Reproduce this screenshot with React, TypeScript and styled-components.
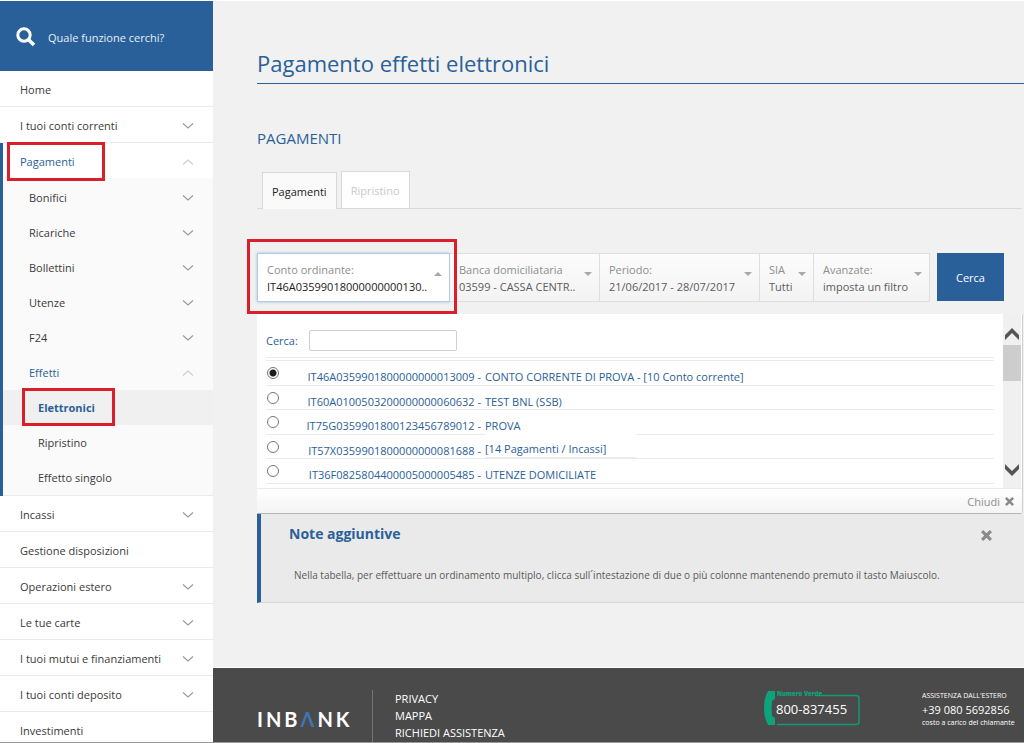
import React, { useState } from "react";
import styled, { createGlobalStyle, css } from "styled-components";

const blue = "#2a6099";
const line = "#ebebeb";

const GlobalStyle = createGlobalStyle`
  *, *::before, *::after { box-sizing: border-box; }
  body { margin: 0; background: #f1f1f1; }
  body, button, input { font-family: "Open Sans", "Noto Sans", sans-serif; font-size: 11px; }
  button { border: 0; padding: 0; background: none; color: inherit; text-align: left; cursor: pointer; }
  a { color: inherit; text-decoration: none; }
  ul { list-style: none; margin: 0; padding: 0; }
  h1, h2, h3, p { margin: 0; font-weight: 400; }
`;

const Page = styled.div`
  display: flex;
  height: 100vh;
  overflow: hidden;
  border-top: 1px solid #fff;
  border-bottom: 1px solid #999;
`;

const Sidebar = styled.aside`
  flex: 0 0 213px;
  min-width: 0;
  background: #fff;
  color: #3a3a3a;
`;

const SearchBox = styled.label`
  display: flex;
  align-items: center;
  gap: 12px;
  height: 70px;
  padding: 2px 16px 0;
  background: ${blue};
  svg { flex: none; }
`;

const SearchInput = styled.input`
  flex: 1;
  min-width: 0;
  border: 0;
  padding: 0;
  outline: 0;
  background: transparent;
  color: #fff;
  &::placeholder { color: #e6eef6; opacity: 1; }
`;

const MenuItem = styled.li<{ $open?: boolean }>`
  position: relative;
  ${(p) => p.$open && css`
    &::before {
      content: "";
      position: absolute;
      inset: 0 auto 0 0;
      width: 3px;
      background: ${blue};
      z-index: 1;
    }
  `}
`;

const rowStyle = css<{ $level?: number; $active?: boolean }>`
  position: relative;
  display: flex;
  align-items: center;
  justify-content: space-between;
  width: 100%;
  height: ${(p) => (p.$level ? 35 : 36)}px;
  padding: ${(p) => (p.$level ? 0 : 2)}px 19px 0 ${(p) => 20 + 9 * (p.$level || 0)}px;
  border-bottom: ${(p) => (p.$level ? "0" : `1px solid ${p.$active ? "#fafafa" : line}`)};
  color: ${(p) => (p.$active ? blue : "#3a3a3a")};
  white-space: nowrap;
`;

const RowButton = styled.button`${rowStyle}`;
const RowLink = styled.a<{ $current?: boolean }>`
  ${rowStyle}
  ${(p) => p.$current && css`background: #f0f0f0; font-weight: 700;`}
`;

const SubMenu = styled.ul`
  padding-top: 1px;
  background: #fafafa;
  border-bottom: 1px solid ${line};
`;

const Highlight = styled.span<{ $x: number; $y: number; $w: number; $h: number }>`
  position: absolute;
  left: ${(p) => p.$x}px;
  top: ${(p) => p.$y}px;
  width: ${(p) => p.$w}px;
  height: ${(p) => p.$h}px;
  border: 3px solid #da1f2b;
  pointer-events: none;
  z-index: 2;
`;

const Main = styled.div`
  flex: 1;
  min-width: 0;
  display: flex;
  flex-direction: column;
`;

const Content = styled.main`
  flex: 1 0 auto;
  padding: 44px 0 0 44px;
`;

const Title = styled.h1`
  height: 39px;
  border-bottom: 1px solid ${blue};
  color: ${blue};
  font-size: 22px;
  line-height: 37px;
`;

const Subtitle = styled.h2`
  margin-top: 42px;
  color: ${blue};
  font-size: 15px;
  line-height: 24px;
`;

const Tabs = styled.div`
  display: flex;
  align-items: flex-end;
  gap: 4px;
  margin: 21px 2px 0 0;
  padding-left: 5px;
  border-bottom: 1px solid #d8d8d8;
`;

const Tab = styled.button<{ $selected?: boolean }>`
  height: 37px;
  padding: 0 9px;
  border: 1px solid #d8d8d8;
  border-bottom: 0;
  background: ${(p) => (p.$selected ? "#fafafa" : "#fff")};
  color: ${(p) => (p.$selected ? "#222" : "#c9c9c9")};
  margin-bottom: ${(p) => (p.$selected ? -1 : 0)}px;
`;

const Filters = styled.div`
  display: flex;
  align-items: flex-start;
  position: relative;
  margin: 44px 20px 0 0;
`;

const Filter = styled.button<{ $w: number; $open?: boolean }>`
  display: flex;
  flex: 0 1 ${(p) => p.$w}px;
  min-width: 0;
  height: 49px;
  justify-content: space-between;
  padding: 7px 7px 0 9px;
  border: 1px solid #dedede;
  border-left-width: 0;
  background: linear-gradient(#fcfcfc, #f3f3f3);
  color: #5c5c5c;
  line-height: 17px;
  white-space: nowrap;
  ${(p) => p.$open && css`
    background: #fff;
    border: 1px solid #b4cbe3;
    box-shadow: 0 0 3px #9dbfe0;
    color: #1c1c1c;
  `}
`;

const FilterText = styled.span`
  display: flex;
  flex-direction: column;
`;

const FilterName = styled.span`
  color: #8e8e8e;
`;

const Caret = styled.span<{ $up?: boolean }>`
  flex: none;
  width: 0;
  height: 0;
  margin-top: 11px;
  border: 4px solid transparent;
  border-top-color: ${(p) => (p.$up ? "transparent" : "#a8a8a8")};
  border-bottom-color: ${(p) => (p.$up ? "#a8a8a8" : "transparent")};
  border-top-width: ${(p) => (p.$up ? 0 : 4)}px;
  border-bottom-width: ${(p) => (p.$up ? 4 : 0)}px;
`;

const SubmitButton = styled.button`
  flex: none;
  width: 67px;
  height: 48px;
  margin-left: auto;
  background: ${blue};
  color: #fff;
  text-align: center;
`;

const Panel = styled.section`
  margin: 12px 1px 0 0;
  background: #fff;
  border-right: 1px solid #cfcfcf;
  border-bottom: 1px solid #b5b5b5;
  border-radius: 0 0 3px 0;
  color: ${blue};
`;

const PanelBody = styled.div`
  display: flex;
  height: 174px;
`;

const PanelList = styled.div`
  flex: 1;
  min-width: 0;
  padding: 16px 9px 0 9px;
`;

const PanelSearch = styled.label`
  display: flex;
  align-items: center;
  gap: 11px;
  height: 28px;
  padding-bottom: 6px;
  border-bottom: 1px solid ${line};
`;

const PanelInput = styled.input`
  width: 148px;
  height: 21px;
  border: 1px solid #cfcfcf;
  border-radius: 2px;
  padding: 0 4px;
`;

const Accounts = styled.div`
  display: flex;
  flex-direction: column;
  height: 124px;
  margin-top: 2px;
  border-top: 1px solid ${line};
`;

const Account = styled.label`
  display: flex;
  flex: 1;
  border-bottom: 1px solid ${line};
  line-height: 32px;
  height: 24px;
  white-space: nowrap;
`;

const Iban = styled.span`
  width: 202px;
  margin-right: 4px;
  text-align: right;
`;

const AccountName = styled.span<{ $lifted?: boolean }>`
  ${(p) => p.$lifted && css`
    position: relative;
    width: 151px;
    height: 25px;
    margin-top: -2px;
    background: #fff;
    border-bottom: 1px solid ${line};
  `}
`;

const Radio = styled.input`
  appearance: none;
  flex: none;
  width: 12px;
  height: 12px;
  margin: 6px 0 0 1px;
  border: 1px solid #767676;
  border-radius: 50%;
  background: #fff;
  &:checked { background: radial-gradient(circle, #1b1b1b 0 3px, #fff 4px); }
`;

const ScrollTrack = styled.div`
  display: flex;
  flex-direction: column;
  align-items: center;
  flex: none;
  width: 18px;
  padding: 14px 0 12px;
  margin-right: 1px;
  background: #f0f0f0;
  svg:last-child { margin-top: auto; }
`;

const ScrollThumb = styled.div`
  width: 18px;
  height: 36px;
  margin-top: 5px;
  background: #cdcdcd;
`;

const PanelFooter = styled.div`
  display: flex;
  justify-content: flex-end;
  height: 25px;
  padding-right: 8px;
  border-top: 1px solid ${line};
  background: linear-gradient(#fff, #f4f4f4);
`;

const CloseText = styled.button`
  display: flex;
  align-items: center;
  gap: 5px;
  color: #8e8e8e;
`;

const Note = styled.section`
  position: relative;
  height: 89px;
  padding: 10px 16px 0 28px;
  border-left: 4px solid ${blue};
  border-bottom: 1px solid #d6d6d6;
  background: #eaeaea;
`;

const NoteTitle = styled.h3`
  color: ${blue};
  font-size: 14px;
  font-weight: 700;
  line-height: 20px;
`;

const NoteText = styled.p`
  margin-top: 22px;
  padding-left: 5px;
  color: #5a5a5a;
  font-size: 10px;
  line-height: 18px;
`;

const NoteClose = styled.button`
  position: absolute;
  top: 16px;
  right: 32px;
  display: flex;
`;

const Footer = styled.footer`
  display: flex;
  flex: none;
  height: 75px;
  padding: 22px 7px 0 44px;
  border-top: 1px solid #fff;
  background: #4a4a4b;
  color: #fff;
`;

const Logo = styled.div`
  width: 116px;
  padding-top: 17px;
  border-right: 1px solid #747474;
  font-family: Lato, sans-serif;
  font-size: 20px;
  font-weight: 700;
  line-height: 24px;
  letter-spacing: 3px;
  span { color: #3f74b0; }
`;

const FooterLinks = styled.nav`
  display: flex;
  flex-direction: column;
  margin-left: 22px;
  line-height: 17px;
`;

const FooterContacts = styled.div`
  display: flex;
  gap: 62px;
  margin-left: auto;
`;

const GreenNumber = styled.div`
  position: relative;
  width: 96px;
  height: 37px;
  padding-left: 12px;
  font-size: 13px;
  line-height: 39px;
  white-space: nowrap;
  svg { position: absolute; left: 0; top: 0; }
`;

const Foreign = styled.div`
  width: 95px;
  white-space: nowrap;
`;
const Small = styled.div`
  font-size: 7px;
  line-height: 12px;
`;
const ForeignNumber = styled.div`
  line-height: 15px;
`;

const Chevron = ({ up }: { up?: boolean }) => (
  <svg width="12" height="8" viewBox="0 0 12 8" fill="none" stroke={up ? "#cdcdcd" : "#9b9b9b"} strokeWidth="1.2">
    <path d={up ? "M1 6.5 6 2l5 4.5" : "M1 1.5 6 6l5-4.5"} />
  </svg>
);

const ScrollArrow = ({ up }: { up?: boolean }) => (
  <svg width="14" height="12" viewBox="0 0 14 12" fill="#555">
    <path d={up ? "M7 0 14 7v5L7 5 0 12V7Z" : "M7 12 14 5V0L7 7 0 0v5Z"} />
  </svg>
);

const Cross = ({ size }: { size: number }) => (
  <svg width={size} height={size} viewBox="0 0 10 10" stroke="#8a8a8a" strokeWidth="2.8">
    <path d="M1 1l8 8M9 1l-8 8" />
  </svg>
);

const SearchIcon = () => (
  <svg width="20" height="20" viewBox="0 0 20 20" fill="none" stroke="#fff" strokeWidth="3">
    <circle cx="8" cy="8" r="6.2" />
    <path d="M12.4 12.4 18 18" strokeWidth="3.6" />
  </svg>
);

const PhoneFrame = () => (
  <svg width="96" height="37" viewBox="0 0 96 37" fill="none" aria-hidden="true">
    <path d="M4 1H11L11 9 8 11Q7 18 8 26L11 28V35H4Q0 28 0 18T4 1Z" fill="#0fa37b" />
    <path d="M53 5.5H92Q95 5.5 95 8.5V31.5Q95 34.5 92 34.5H13" stroke="#0f9b76" strokeWidth="1.5" />
    <text x="13" y="6" fontSize="6" fontWeight="800" fontFamily="Open Sans, sans-serif" fill="#0fa37b">Numero Verde</text>
  </svg>
);

const subItems = ["Bonifici", "Ricariche", "Bollettini", "Utenze", "F24"];
const lowerItems: [string, boolean][] = [
  ["Incassi", true],
  ["Gestione disposizioni", false],
  ["Operazioni estero", true],
  ["Le tue carte", true],
  ["I tuoi mutui e finanziamenti", true],
  ["I tuoi conti deposito", true],
  ["Investimenti", false],
];

const accounts = [
  { iban: "IT46A0359901800000000013009", name: "CONTO CORRENTE DI PROVA - [10 Conto corrente]" },
  { iban: "IT60A0100503200000000060632", name: "TEST BNL (SSB)" },
  { iban: "IT75G0359901800123456789012", name: "PROVA" },
  { iban: "IT57X0359901800000000081688", name: "[14 Pagamenti / Incassi]", lifted: true },
  { iban: "IT36F0825804400005000005485", name: "UTENZE DOMICILIATE" },
];

const filters = [
  { name: "Conto ordinante:", value: "IT46A03599018000000000130..", w: 193, open: true },
  { name: "Banca domiciliataria", value: "03599 - CASSA CENTR..", w: 150 },
  { name: "Periodo:", value: "21/06/2017 - 28/07/2017", w: 160 },
  { name: "SIA", value: "Tutti", w: 54 },
  { name: "Avanzate:", value: "imposta un filtro", w: 116 },
];

const Entry = ({ label, expandable }: { label: string; expandable: boolean }) => (
  <MenuItem>
    {expandable ? (
      <RowButton>{label}<Chevron /></RowButton>
    ) : (
      <RowLink href="#">{label}</RowLink>
    )}
  </MenuItem>
);

export default function App() {
  const [selected, setSelected] = useState(0);
  return (
    <>
      <GlobalStyle />
      <Page>
        <Sidebar>
          <SearchBox>
            <SearchIcon />
            <SearchInput placeholder="Quale funzione cerchi?" aria-label="Quale funzione cerchi?" />
          </SearchBox>
          <ul>
            <Entry label="Home" expandable={false} />
            <Entry label="I tuoi conti correnti" expandable />
            <MenuItem $open>
              <RowButton $active aria-expanded>
                Pagamenti
                <Chevron up />
                <Highlight $x={7} $y={-1} $w={98} $h={39} />
              </RowButton>
              <SubMenu>
                {subItems.map((s) => (
                  <li key={s}><RowButton $level={1}>{s}<Chevron /></RowButton></li>
                ))}
                <li>
                  <RowButton $level={1} $active aria-expanded>Effetti<Chevron up /></RowButton>
                  <ul>
                    <li>
                      <RowLink href="#" $level={2} $active $current>
                        Elettronici
                        <Highlight $x={22} $y={-2} $w={93} $h={38} />
                      </RowLink>
                    </li>
                    <li><RowLink href="#" $level={2}>Ripristino</RowLink></li>
                    <li><RowLink href="#" $level={2}>Effetto singolo</RowLink></li>
                  </ul>
                </li>
              </SubMenu>
            </MenuItem>
            {lowerItems.map(([l, e]) => <Entry key={l} label={l} expandable={e} />)}
          </ul>
        </Sidebar>
        <Main>
          <Content>
            <Title>Pagamento effetti elettronici</Title>
            <Subtitle>PAGAMENTI</Subtitle>
            <Tabs role="tablist">
              <Tab role="tab" aria-selected $selected>Pagamenti</Tab>
              <Tab role="tab" aria-selected={false}>Ripristino</Tab>
            </Tabs>
            <Filters>
              {filters.map((f) => (
                <Filter key={f.name} $w={f.w} $open={f.open}>
                  <FilterText>
                    <FilterName>{f.name}</FilterName>
                    {f.value}
                  </FilterText>
                  <Caret $up={f.open} />
                </Filter>
              ))}
              <SubmitButton>Cerca</SubmitButton>
              <Highlight $x={-10} $y={-14} $w={210} $h={75} />
            </Filters>
            <Panel>
              <PanelBody>
                <PanelList>
                  <PanelSearch>Cerca:<PanelInput type="text" /></PanelSearch>
                  <Accounts>
                    {accounts.map((a, i) => (
                      <Account key={a.iban}>
                        <Radio type="radio" name="account" checked={selected === i} onChange={() => setSelected(i)} />
                        <Iban>{a.iban} -</Iban>
                        <AccountName $lifted={a.lifted}>{a.name}</AccountName>
                      </Account>
                    ))}
                  </Accounts>
                </PanelList>
                <ScrollTrack>
                  <ScrollArrow up />
                  <ScrollThumb />
                  <ScrollArrow />
                </ScrollTrack>
              </PanelBody>
              <PanelFooter>
                <CloseText>Chiudi <Cross size={9} /></CloseText>
              </PanelFooter>
            </Panel>
            <Note>
              <NoteTitle>Note aggiuntive</NoteTitle>
              <NoteClose aria-label="Chiudi nota"><Cross size={11} /></NoteClose>
              <NoteText>Nella tabella, per effettuare un ordinamento multiplo, clicca sull´intestazione di due o più colonne mantenendo premuto il tasto Maiuscolo.</NoteText>
            </Note>
          </Content>
          <Footer>
            <Logo>INB<span>Λ</span>NK</Logo>
            <FooterLinks>
              <a href="#">PRIVACY</a>
              <a href="#">MAPPA</a>
              <a href="#">RICHIEDI ASSISTENZA</a>
            </FooterLinks>
            <FooterContacts>
              <GreenNumber><PhoneFrame />800-837455</GreenNumber>
              <Foreign>
                <Small>ASSISTENZA DALL'ESTERO</Small>
                <ForeignNumber>+39 080 5692856</ForeignNumber>
                <Small>costo a carico del chiamante</Small>
              </Foreign>
            </FooterContacts>
          </Footer>
        </Main>
      </Page>
    </>
  );
}
